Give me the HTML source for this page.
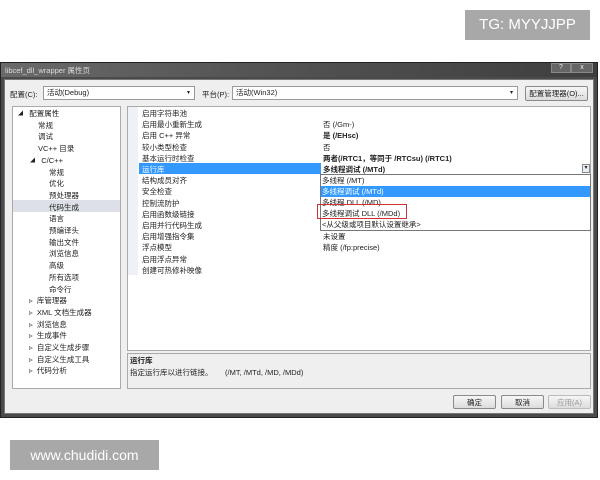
<!DOCTYPE html>
<html><head><meta charset="utf-8"><style>
*{margin:0;padding:0;box-sizing:border-box}
body{width:600px;height:480px;background:#fff;position:relative;overflow:hidden;font-family:"Liberation Sans","Noto Sans CJK SC",sans-serif;font-size:7.5px;color:#222}
.a{position:absolute;white-space:nowrap}
.wm{background:#a8a8a8;color:#fff;font-size:15px;line-height:30px;text-align:center}
.t div{position:absolute;white-space:nowrap;line-height:11px}
.s{font-size:5px;vertical-align:1px}
.btn{position:absolute;border:1px solid #8a8a8a;border-radius:2px;background:linear-gradient(#f6f6f6,#dcdcdc);text-align:center;line-height:13px}
</style></head><body>
<div class="a wm" style="left:465px;top:10px;width:125px;height:30px">TG: MYYJJPP</div>
<div class="a wm" style="left:10px;top:440px;width:149px;height:30px;font-size:14px">www.chudidi.com</div>

<div class="a" style="left:0;top:62px;width:598px;height:356px;background:#4a4a4a;border:1px solid #222"></div>
<div class="a" style="left:1px;top:63px;width:596px;height:14px;background:linear-gradient(90deg,#6a6a6a,#555 40%,#3e3e3e)"></div>
<div class="a" style="left:5px;top:65px;color:#ddd;font-size:7.5px">libcef_dll_wrapper 属性页</div>
<div class="a" style="left:551px;top:63px;width:20px;height:10px;background:#666;border:1px solid #888;color:#eee;text-align:center;line-height:8px;font-size:7px">?</div>
<div class="a" style="left:571px;top:63px;width:22px;height:10px;background:#666;border:1px solid #888;color:#eee;text-align:center;line-height:8px;font-size:7px">x</div>
<div class="a" style="left:4px;top:79px;width:590px;height:335px;background:#efefef;border:1px solid #777"></div>

<div class="a" style="left:10px;top:89px">配置(C):</div>
<div class="a" style="left:43px;top:86px;width:152px;height:14px;background:#fff;border:1px solid #999;padding-left:3px;line-height:12px">活动(Debug)<span style="position:absolute;right:4px;font-size:6px">▾</span></div>
<div class="a" style="left:202px;top:89px">平台(P):</div>
<div class="a" style="left:232px;top:86px;width:286px;height:14px;background:#fff;border:1px solid #999;padding-left:3px;line-height:12px">活动(Win32)<span style="position:absolute;right:4px;font-size:6px">▾</span></div>
<div class="btn" style="left:525px;top:86px;width:63px;height:15px">配置管理器(O)...</div>

<div class="a" style="left:12px;top:106px;width:109px;height:283px;background:#fff;border:1px solid #aaa"></div>
<div class="a" style="left:13px;top:200px;width:107px;height:12px;background:#dde0e6"></div>
<div class="a t" style="left:0;top:108px">
<div style="left:18px;top:0"><span class="s">◢</span>&nbsp;&nbsp; 配置属性</div>
<div style="left:38px;top:11.7px">常规</div>
<div style="left:38px;top:23.4px">调试</div>
<div style="left:38px;top:35.1px">VC++ 目录</div>
<div style="left:30px;top:46.8px"><span class="s">◢</span>&nbsp;&nbsp; C/C++</div>
<div style="left:49px;top:58.5px">常规</div>
<div style="left:49px;top:70.2px">优化</div>
<div style="left:49px;top:81.9px">预处理器</div>
<div style="left:49px;top:93.6px">代码生成</div>
<div style="left:49px;top:105.3px">语言</div>
<div style="left:49px;top:117px">预编译头</div>
<div style="left:49px;top:128.7px">输出文件</div>
<div style="left:49px;top:140.4px">浏览信息</div>
<div style="left:49px;top:152.1px">高级</div>
<div style="left:49px;top:163.8px">所有选项</div>
<div style="left:49px;top:175.5px">命令行</div>
<div style="left:29px;top:187.2px">▹&nbsp; 库管理器</div>
<div style="left:29px;top:198.9px">▹&nbsp; XML 文档生成器</div>
<div style="left:29px;top:210.6px">▹&nbsp; 浏览信息</div>
<div style="left:29px;top:222.3px">▹&nbsp; 生成事件</div>
<div style="left:29px;top:234px">▹&nbsp; 自定义生成步骤</div>
<div style="left:29px;top:245.7px">▹&nbsp; 自定义生成工具</div>
<div style="left:29px;top:257.4px">▹&nbsp; 代码分析</div>
</div>

<div class="a" style="left:127px;top:106px;width:464px;height:245px;background:#fff;border:1px solid #aaa"></div>
<div class="a" style="left:128px;top:107px;width:10px;height:168px;background:#eef1f6"></div>
<div class="a" style="left:139px;top:163px;width:182px;height:11px;background:#3399ff"></div>
<div class="a t" style="left:0;top:108px">
<div style="left:142px;top:0">启用字符串池</div>
<div style="left:142px;top:11.2px">启用最小重新生成</div>
<div style="left:142px;top:22.4px">启用 C++ 异常</div>
<div style="left:142px;top:33.6px">较小类型检查</div>
<div style="left:142px;top:44.8px">基本运行时检查</div>
<div style="left:142px;top:56px;color:#fff">运行库</div>
<div style="left:142px;top:67.2px">结构成员对齐</div>
<div style="left:142px;top:78.4px">安全检查</div>
<div style="left:142px;top:89.6px">控制流防护</div>
<div style="left:142px;top:100.8px">启用函数级链接</div>
<div style="left:142px;top:112px">启用并行代码生成</div>
<div style="left:142px;top:123.2px">启用增强指令集</div>
<div style="left:142px;top:134.4px">浮点模型</div>
<div style="left:142px;top:145.6px">启用浮点异常</div>
<div style="left:142px;top:156.8px">创建可热修补映像</div>
<div style="left:323px;top:11.2px">否 (/Gm-)</div>
<div style="left:323px;top:22.4px;font-weight:bold">是 (/EHsc)</div>
<div style="left:323px;top:33.6px">否</div>
<div style="left:323px;top:44.8px;font-weight:bold">两者(/RTC1，等同于 /RTCsu) (/RTC1)</div>
<div style="left:323px;top:56px;font-weight:bold">多线程调试 (/MTd)</div>
<div style="left:323px;top:123.2px">未设置</div>
<div style="left:323px;top:134.4px">精度 (/fp:precise)</div>
</div>
<div class="a" style="left:582px;top:164px;width:8px;height:9px;border:1px solid #888;background:#e8eef6;font-size:6px;text-align:center;line-height:7px">▾</div>
<div class="a" style="left:320px;top:174px;width:271px;height:57px;background:#fff;border:1px solid #777"></div>
<div class="a" style="left:321px;top:186px;width:269px;height:11px;background:#3399ff"></div>
<div class="a t" style="left:0;top:175px">
<div style="left:322px;top:0">多线程 (/MT)</div>
<div style="left:322px;top:11px;color:#fff">多线程调试 (/MTd)</div>
<div style="left:322px;top:22px">多线程 DLL (/MD)</div>
<div style="left:322px;top:33px">多线程调试 DLL (/MDd)</div>
<div style="left:322px;top:44px">&lt;从父级或项目默认设置继承&gt;</div>
</div>
<div class="a" style="left:317px;top:204px;width:90px;height:15px;border:1.5px solid #d0323a"></div>

<div class="a" style="left:127px;top:353px;width:464px;height:36px;background:#efefef;border:1px solid #aaa"></div>
<div class="a" style="left:130px;top:355px;font-weight:bold">运行库</div>
<div class="a" style="left:130px;top:367px">指定运行库以进行链接。&nbsp;&nbsp;&nbsp;&nbsp;&nbsp; (/MT, /MTd, /MD, /MDd)</div>

<div class="btn" style="left:453px;top:395px;width:43px;height:14px">确定</div>
<div class="btn" style="left:501px;top:395px;width:43px;height:14px">取消</div>
<div class="btn" style="left:548px;top:395px;width:43px;height:14px;color:#999;border-color:#bbb">应用(A)</div>
</body></html>
